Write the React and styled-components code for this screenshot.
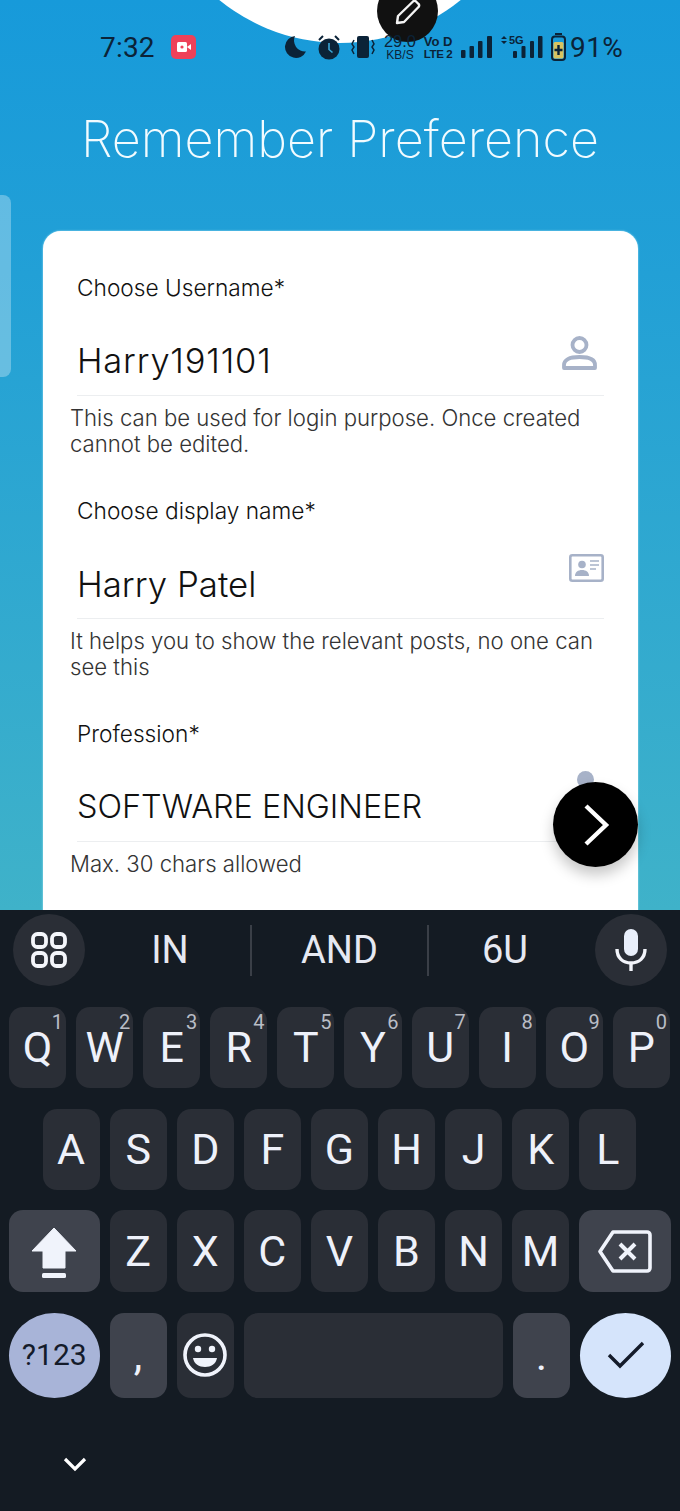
import React from 'react';
import styled, { createGlobalStyle } from 'styled-components';

const Global = createGlobalStyle`
  html, body { margin: 0; padding: 0; background: #141b23; }
  * { box-sizing: border-box; }
`;
const Page = styled.div`
  width: 680px; height: 1511px; overflow: hidden; display: flex; flex-direction: column;
  background: #141b23;
`;
const Screen = styled.section`
  position: relative; height: 910px; overflow: hidden; display: flex; flex-direction: column;
  padding-top: 34px;
  background: linear-gradient(180deg, #179ada 0%, #22a0d6 30%, #3fb2c9 100%);
`;
const Blob = styled.div`
  position: absolute; left: 149px; top: -339px; width: 382px; height: 382px; border-radius: 50%; background: #fff;
`;
const PenBubble = styled.div`
  position: absolute; left: 377px; top: -20px; width: 61px; height: 62px; border-radius: 50%; background: #111;
  display: flex; align-items: flex-end; justify-content: center; padding-bottom: 17px;
`;
const SideHandle = styled.div`
  position: absolute; left: 0; top: 195px; width: 11px; height: 182px;
  background: rgba(255,255,255,.3); border-radius: 0 8px 8px 0;
`;
const StatusBar = styled.div`
  position: relative; height: 26px; display: flex; align-items: center; padding-left: 100px;
  color: #0b2338; font-family: Roboto, sans-serif;
`;
const Time = styled.span` font-size: 28px; width: 71px; letter-spacing: .2px; `;
const Rec = styled.div`
  width: 25px; height: 24px; border-radius: 5px; background: #ee4159; margin-right: 88px;
  display: flex; align-items: center; justify-content: center;
`;
const SIcon = styled.svg` display: block; flex: none; margin-left: ${p => p.$ml || 0}px; `;
const Stack = styled.div`
  width: ${p => p.$w}px; margin-left: ${p => p.$ml}px; display: flex; flex-direction: column; align-items: center;
  font-family: "Liberation Sans", sans-serif; white-space: nowrap;
`;
const StackLine = styled.span`
  font-size: ${p => p.$s}px; font-weight: ${p => p.$b ? 700 : 400}; line-height: ${p => p.$lh}px;
  letter-spacing: ${p => p.$ls || 0}px;
`;
const Percent = styled.span` font-size: 28px; margin-left: 3px; letter-spacing: .4px; `;
const Title = styled.h1`
  position: relative; margin: 51px 0 64px; height: 56px; text-align: center;
  font: 250 50.3px/56px Inter, sans-serif; color: #f2fbff;
`;
const Card = styled.div`
  flex: 1; margin: 0 42.5px; background: #fff; border-radius: 18px 18px 0 0; padding-top: 44px;
  position: relative; box-shadow: 0 0 2px rgba(200,245,255,.9);
  font-family: Inter, sans-serif; font-weight: 300;
`;
const Field = styled.div` margin-bottom: 41px; `;
const Label = styled.div` margin-left: 34.5px; font-size: 22.7px; line-height: 26px; color: #111; `;
const InputRow = styled.div`
  margin: 34px 34px 0 34.5px; height: 61px; border-bottom: 1px solid #eceef0;
  display: flex; justify-content: space-between; align-items: flex-start;
`;
const Value = styled.span`
  font-size: ${p => p.$size}px; letter-spacing: ${p => p.$ls || 0}px;
  line-height: 52px; color: #111; white-space: nowrap;
`;
const FieldIcon = styled.svg`
  display: block; flex: none; margin-top: ${p => p.$top}px; margin-right: ${p => p.$right}px;
`;
const Helper = styled.p`
  margin: 10px 28px 0 27.5px; font-size: 22.15px; line-height: 25.5px; color: #333;
`;
const Fab = styled.div`
  position: absolute; left: 553px; top: 782px; width: 85px; height: 85px; border-radius: 50%; background: #000;
  display: flex; align-items: center; justify-content: center;
  box-shadow: 0 8px 14px rgba(0,0,0,.22);
`;
const Keyboard = styled.div`
  flex: 1; background: #141b23; padding-top: 4px; display: flex; flex-direction: column; gap: 20.5px;
  font-family: Roboto, sans-serif; color: #eef1fa;
`;
const Suggestions = styled.div`
  height: 72px; display: flex; align-items: center; padding: 0 13px; margin-bottom: .5px;
`;
const RoundTool = styled.div`
  width: 72px; height: 72px; flex: none; border-radius: 50%; background: #2a2e36;
  display: flex; align-items: center; justify-content: center;
`;
const Suggestion = styled.div`
  flex: none; width: ${p => p.$w}px; padding: ${p => p.$pad || '0'}; text-align: center;
  font-size: 38px; font-weight: 400; color: #e6e9f2;
  border-left: ${p => p.$div ? '2px solid #3a3f47' : '0'}; height: 51px; line-height: 51px;
`;
const KeyRow = styled.div`
  display: flex; gap: 10px; height: ${p => p.$h}px; padding: 0 ${p => p.$pad}px;
`;
const Key = styled.div`
  position: relative; flex: ${p => p.$grow ? '1 1 0' : `0 0 ${p.$w || 57.1}px`};
  border-radius: ${p => p.$round ? '50%' : '14px'};
  background: ${p => p.$bg || '#2a2e36'}; color: ${p => p.$fg || '#eef1fa'};
  display: flex; align-items: center; justify-content: center;
  font-size: ${p => p.$size || 43}px; line-height: 1;
`;
const Hint = styled.span`
  position: absolute; top: 3px; right: 3px; font-size: 20px; line-height: 24px; color: #b9bdc6;
`;
const Footer = styled.div` padding: 38px 0 0 63px; `;

const SmallText = styled.text` font-family: "Liberation Sans", sans-serif; font-weight: 700; `;

const row1 = [['Q','1'],['W','2'],['E','3'],['R','4'],['T','5'],['Y','6'],['U','7'],['I','8'],['O','9'],['P','0']];
const row2 = ['A','S','D','F','G','H','J','K','L'];
const row3 = ['Z','X','C','V','B','N','M'];
const INK = '#0b2338';

export default function App() {
  return (
    <Page>
      <Global />
      <Screen>
        <Blob />
        <PenBubble>
          <svg width="28" height="26" viewBox="0 0 28 26" fill="none" stroke="#f4f4f4" strokeWidth="2.4" strokeLinejoin="round">
            <path d="M3 24l1-7L19 2.5a2 2 0 0 1 3 0l2.5 2.5a2 2 0 0 1 0 3L10 23z" />
          </svg>
        </PenBubble>
        <SideHandle />
        <StatusBar>
          <Time>7:32</Time>
          <Rec>
            <svg width="14" height="10" viewBox="0 0 14 10" fill="#fff"><rect x="0" y="0" width="10" height="10" rx="1.5" /><path d="M10 5l4-3v6z" /><circle cx="5" cy="5" r="1.6" fill="#ee4159" /></svg>
          </Rec>
          <SIcon width="22" height="24" viewBox="0 0 22 24" fill={INK}>
            <path d="M11 1a11 11 0 1 0 11 15.5A11 11 0 0 1 11 1z" />
          </SIcon>
          <SIcon $ml={12} width="22" height="26" viewBox="0 0 22 26">
            <circle cx="11" cy="15" r="10.5" fill={INK} />
            <path d="M11 9v6.5l3.5 3" stroke="#3aa7d8" strokeWidth="1.6" fill="none" />
            <path d="M1 6l4-4M21 6l-4-4" stroke={INK} strokeWidth="2" fill="none" />
          </SIcon>
          <SIcon $ml={11} width="24" height="22" viewBox="0 0 24 22">
            <rect x="6" y="0" width="12" height="22" rx="2" fill={INK} />
            <path d="M3 4L1 8l2 3-2 3 2 4M21 4l2 4-2 3 2 3-2 4" stroke={INK} strokeWidth="1.5" fill="none" />
          </SIcon>
          <Stack $w={34} $ml={8}>
            <StackLine $s={16.5} $lh={16}>29.0</StackLine>
            <StackLine $s={12} $lh={12}>KB/S</StackLine>
          </Stack>
          <Stack $w={26} $ml={8}>
            <StackLine $s={13} $lh={13} $b>Vo D</StackLine>
            <StackLine $s={11.5} $lh={12} $b $ls={-.4}>LTE 2</StackLine>
          </Stack>
          <SIcon $ml={10} width="31" height="22" viewBox="0 0 31 22" fill={INK}>
            <rect x="0" y="14" width="4.5" height="8" rx="1" />
            <rect x="8.5" y="10" width="4.5" height="12" rx="1" />
            <rect x="17" y="5" width="4.5" height="17" rx="1" />
            <rect x="26" y="0" width="5" height="22" rx="1" />
          </SIcon>
          <SIcon $ml={8} width="43" height="26" viewBox="0 0 43 26" fill={INK}>
            <path d="M4 2l3 3H1zM4 10l3-3H1z" />
            <SmallText x="9" y="10" fontSize="11">5G</SmallText>
            <rect x="13" y="17" width="4" height="7" rx="1" />
            <rect x="21.5" y="12" width="4" height="12" rx="1" />
            <rect x="30" y="7" width="4" height="17" rx="1" />
            <rect x="38" y="2" width="4.5" height="22" rx="1" />
          </SIcon>
          <SIcon $ml={7} width="17" height="28" viewBox="0 0 17 28">
            <rect x="5" y="0" width="7" height="2" fill={INK} />
            <rect x="2" y="3.5" width="13" height="23.500" rx="3" fill="none" stroke={INK} strokeWidth="2" />
            <rect x="3.500" y="9" width="10" height="16.500" rx="1.500" fill="#d9c460" />
            <path d="M8.5 12v10M4.500 17h8" stroke={INK} strokeWidth="2.4" />
          </SIcon>
          <Percent>91%</Percent>
        </StatusBar>
        <Title>Remember Preference</Title>
        <Card>
          <Field>
            <Label>Choose Username*</Label>
            <InputRow>
              <Value $size={34.5} $ls={.8}>Harry191101</Value>
              <FieldIcon $top={1} $right={7} width="35" height="34" viewBox="0 0 35 34" fill="none" stroke="#a7b2c8" strokeWidth="3.8">
                <circle cx="17.5" cy="9" r="7" />
                <path d="M2 32v-3c0-5 5-8 15.500-8s15.500 3 15.500 8v3z" strokeLinejoin="round" />
              </FieldIcon>
            </InputRow>
            <Helper>This can be used for login purpose. Once created cannot be edited.</Helper>
          </Field>
          <Field>
            <Label>Choose display name*</Label>
            <InputRow>
              <Value $size={34.8}>Harry Patel</Value>
              <FieldIcon $top={-4} $right={0} width="35" height="28" viewBox="0 0 35 28" fill="none">
                <rect x="1.3" y="1.3" width="32.400" height="25.400" rx="2" stroke="#a7b2c8" strokeWidth="2.6" />
                <circle cx="13" cy="10.500" r="3.800" fill="#a7b2c8" />
                <path d="M6 22c0-4 3-6 7-6s7 2 7 6z" fill="#a7b2c8" />
                <path d="M21 7h9M21 11h9M21 15h6" stroke="#a7b2c8" strokeWidth="1.500" />
              </FieldIcon>
            </InputRow>
            <Helper>It helps you to show the relevant posts, no one can see this</Helper>
          </Field>
          <Field>
            <Label>Profession*</Label>
            <InputRow>
              <Value $size={32.4}>SOFTWARE ENGINEER</Value>
              <FieldIcon $top={-10} $right={10} width="17" height="17" viewBox="0 0 17 17">
                <circle cx="8.500" cy="8.500" r="8.500" fill="#a7b2c8" />
              </FieldIcon>
            </InputRow>
            <Helper>Max. 30 chars allowed</Helper>
          </Field>
        </Card>
        <Fab>
          <svg width="30" height="44" viewBox="0 0 30 44" fill="none" stroke="#fff" strokeWidth="4.400">
            <path d="M5 3l20 19L5 41" />
          </svg>
        </Fab>
      </Screen>
      <Keyboard>
        <Suggestions>
          <RoundTool>
            <svg width="36" height="36" viewBox="0 0 36 36" fill="none" stroke="#f4f6fb" strokeWidth="3.800">
              <rect x="2" y="2" width="13" height="13" rx="4.500" />
              <rect x="21" y="2" width="13" height="13" rx="4.500" />
              <rect x="2" y="21" width="13" height="13" rx="4.500" />
              <rect x="21" y="21" width="13" height="13" rx="4.500" />
            </svg>
          </RoundTool>
          <Suggestion $w={165} $pad="0 0 0 5px">IN</Suggestion>
          <Suggestion $w={177} $div>AND</Suggestion>
          <Suggestion $w={168} $pad="0 14px 0 0" $div>6U</Suggestion>
          <RoundTool>
            <svg width="32" height="42" viewBox="0 0 32 42" fill="none">
              <rect x="9" y="0" width="14" height="27" rx="7" fill="#e9effb" />
              <path d="M2 20c0 9 6 14 14 14s14-5 14-14" stroke="#f2f4fa" strokeWidth="3.400" />
              <path d="M16 33v9" stroke="#f2f4fa" strokeWidth="3.400" />
            </svg>
          </RoundTool>
        </Suggestions>
        <KeyRow $h={81} $pad={9}>
          {row1.map(([k, h]) => <Key key={k}>{k}<Hint>{h}</Hint></Key>)}
        </KeyRow>
        <KeyRow $h={81} $pad={42.6}>
          {row2.map(k => <Key key={k}>{k}</Key>)}
        </KeyRow>
        <KeyRow $h={82} $pad={9}>
          <Key $w={90.500} $bg="#3f434d">
            <svg width="46" height="56" viewBox="0 -4 46 56" fill="#f0f3fb">
              <path d="M23 1L45 24H34v17H12V24H1z" strokeLinejoin="round" stroke="#f0f3fb" strokeWidth="1" />
              <rect x="11" y="46" width="24" height="5" rx="1.500" />
            </svg>
          </Key>
          {row3.map(k => <Key key={k}>{k}</Key>)}
          <Key $grow $bg="#3f434d">
            <svg width="54" height="43" viewBox="0 0 54 43" fill="none" stroke="#f0f3fb" strokeWidth="3.600" strokeLinejoin="round">
              <path d="M15 2h34a3 3 0 0 1 3 3v33a3 3 0 0 1-3 3H15L2 21.500z" />
              <path d="M22 14l15 15M37 14L22 29" strokeWidth="4" />
            </svg>
          </Key>
        </KeyRow>
        <KeyRow $h={85} $pad={9}>
          <Key $w={90.500} $round $bg="#a8b4d8" $fg="#141b2a" $size={30}>?123</Key>
          <Key $bg="#3f434d">,</Key>
          <Key>
            <svg width="44" height="44" viewBox="0 0 44 44" fill="none">
              <circle cx="22" cy="22" r="20" stroke="#f0f3fb" strokeWidth="3.600" />
              <circle cx="15" cy="16" r="3.200" fill="#f0f3fb" />
              <circle cx="29" cy="16" r="3.200" fill="#f0f3fb" />
              <path d="M10 25h24c-1 6-6 9-12 9s-11-3-12-9z" fill="#f0f3fb" />
            </svg>
          </Key>
          <Key $grow />
          <Key $bg="#3f434d">.</Key>
          <Key $w={91} $round $bg="#d5e4fb">
            <svg width="38" height="28" viewBox="0 0 38 28" fill="none" stroke="#141b2a" strokeWidth="3.400">
              <path d="M2 14l11 11L36 2" />
            </svg>
          </Key>
        </KeyRow>
        <Footer>
          <svg width="24" height="16" viewBox="0 0 24 16" fill="none" stroke="#fff" strokeWidth="3.200">
            <path d="M2 3l10 10L22 3" />
          </svg>
        </Footer>
      </Keyboard>
    </Page>
  );
}
